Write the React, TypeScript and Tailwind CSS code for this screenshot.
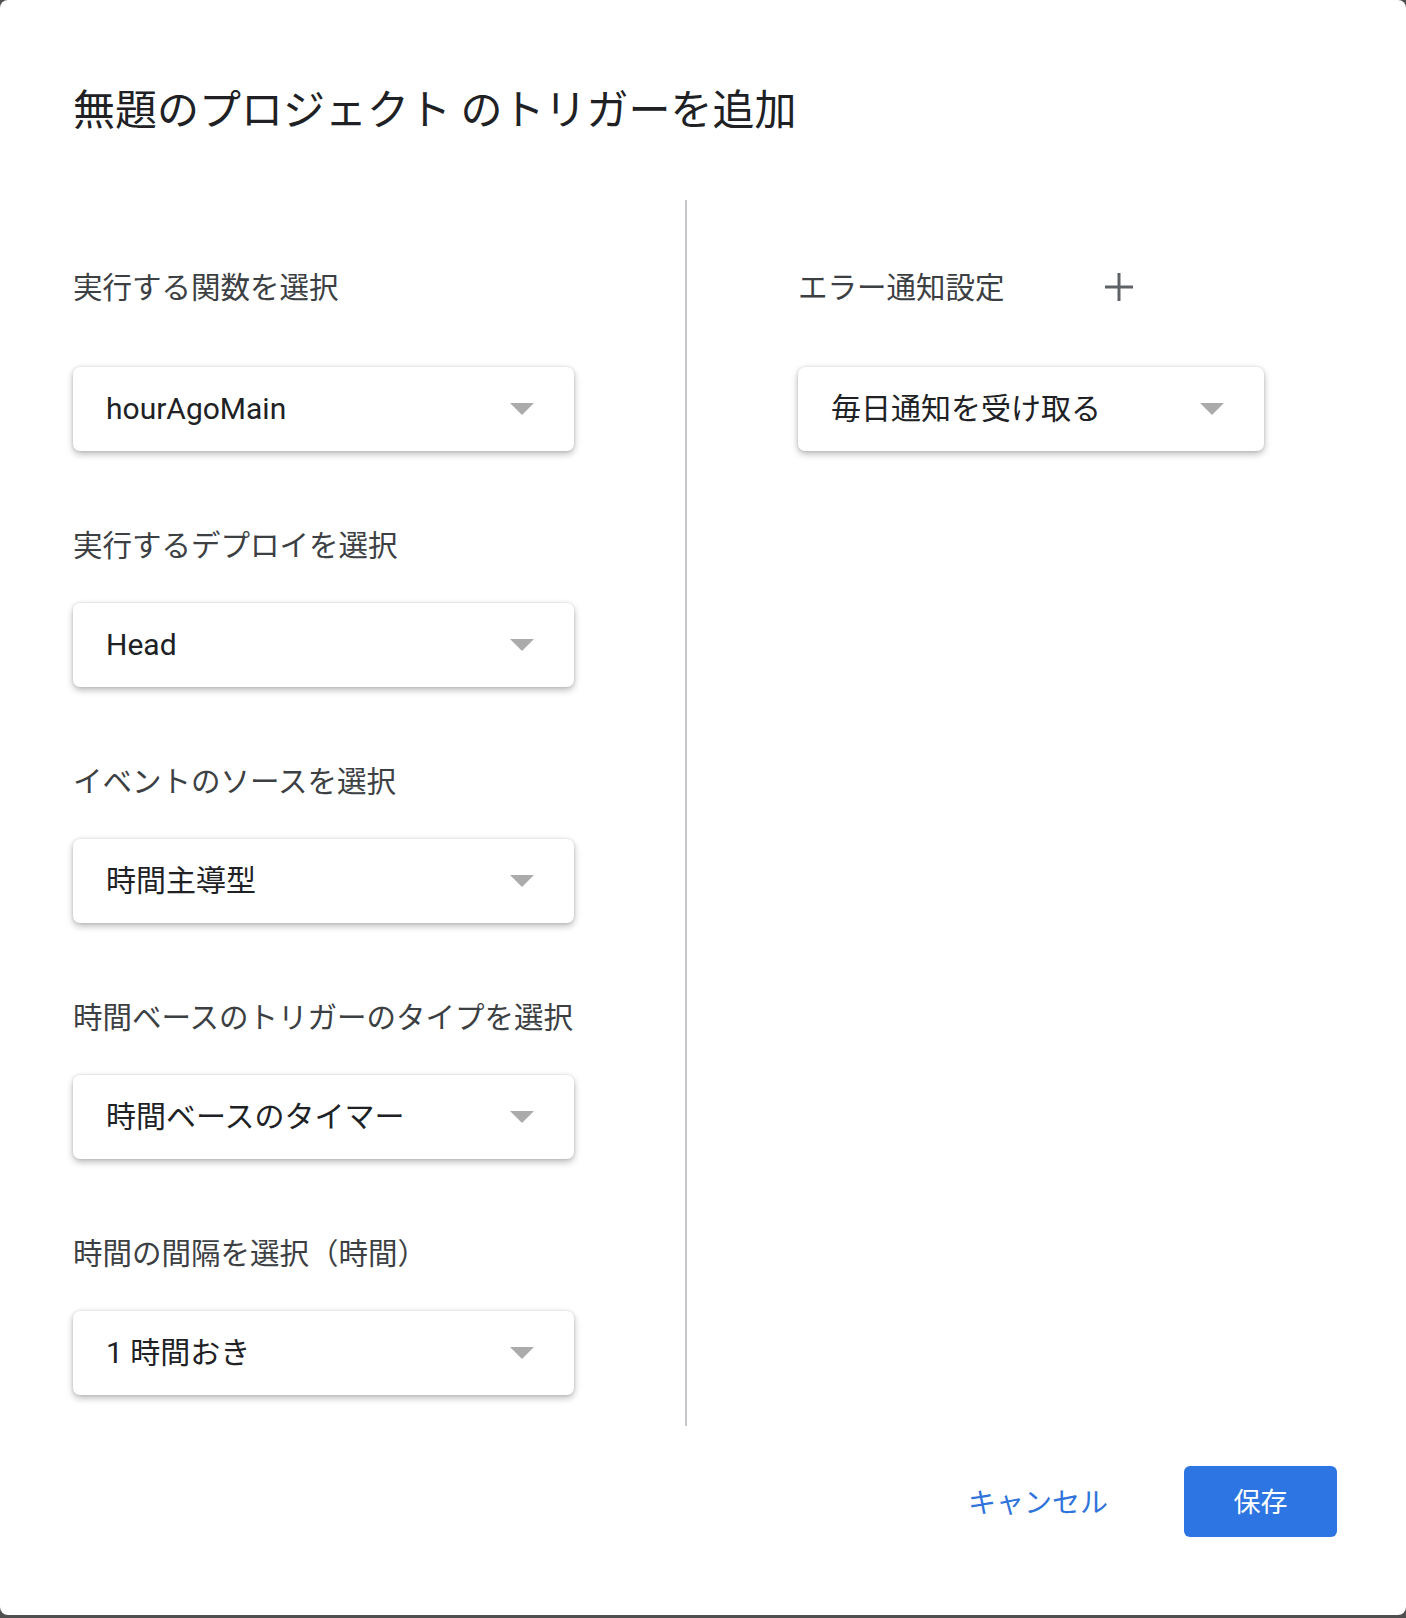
import React from "react";

const JP = { fontFamily: '"Noto Sans CJK JP", "Noto Sans", sans-serif' };
const MIX = { fontFamily: 'Roboto, "Noto Sans CJK JP", sans-serif' };

function Arrow() {
  return (
    <svg width="24" height="12" viewBox="0 0 24 12" className="shrink-0">
      <polygon points="0,0 24,0 12,12" fill="#ababab" />
    </svg>
  );
}

function Dropdown({ value, w }: { value: string; w: string }) {
  return (
    <div
      className={`${w} h-[84px] bg-white rounded-[7px] flex items-center justify-between pl-[33px] pr-[40px] shadow-[0_3px_7px_rgba(0,0,0,0.28),0_0_3px_rgba(0,0,0,0.12)]`}
    >
      <span className="text-[30px] text-[#202124] leading-none" style={MIX}>
        {value}
      </span>
      <Arrow />
    </div>
  );
}

function Label({ children, mt }: { children: React.ReactNode; mt: string }) {
  return (
    <div className={`${mt} h-[40px] leading-[36px] text-[29.5px] text-[#3c4043] whitespace-nowrap`} style={JP}>
      {children}
    </div>
  );
}

export default function App() {
  const sections = [
    { label: "実行するデプロイを選択", value: "Head" },
    { label: "イベントのソースを選択", value: "時間主導型" },
    { label: "時間ベースのトリガーのタイプを選択", value: "時間ベースのタイマー" },
    { label: "時間の間隔を選択（時間）", value: "1 時間おき" },
  ];
  return (
    <div className="w-[1406px] h-[1618px] bg-[#4f4f4f]">
      <div className="h-[1615px] bg-white rounded-[8px] flex flex-col">
        <div
          className="h-[200px] pt-[79px] pl-[73px] text-[42px] leading-[56px] text-[#202124] whitespace-nowrap"
          style={JP}
        >
          無題のプロジェクト のトリガーを追加
        </div>
        <div className="h-[1226px] flex">
          <div className="w-[501px] ml-[73px] pt-[67px] flex flex-col">
            <Label mt="mt-0">実行する関数を選択</Label>
            <div className="mt-[60px]">
              <Dropdown value="hourAgoMain" w="w-[501px]" />
            </div>
            {sections.map((s) => (
              <React.Fragment key={s.label}>
                <Label mt="mt-[74px]">{s.label}</Label>
                <div className="mt-[38px]">
                  <Dropdown value={s.value} w="w-[501px]" />
                </div>
              </React.Fragment>
            ))}
          </div>
          <div className="ml-[111px] w-[2px] h-full bg-[#c6c6ca]" />
          <div className="ml-[111px] pt-[67px] flex flex-col">
            <div className="h-[40px] flex items-center">
              <span className="text-[29.5px] leading-[36px] pb-[4px] text-[#3c4043]" style={JP}>
                エラー通知設定
              </span>
              <svg width="30" height="30" viewBox="0 0 30 30" className="ml-[99px]">
                <rect x="13.5" y="1" width="3" height="28" fill="#5f6368" />
                <rect x="1" y="13.5" width="28" height="3" fill="#5f6368" />
              </svg>
            </div>
            <div className="mt-[60px]">
              <Dropdown value="毎日通知を受け取る" w="w-[466px]" />
            </div>
          </div>
        </div>
        <div className="mt-[40px] flex justify-end items-center pr-[69px]">
          <button className="text-[28px] text-[#2f74dc] leading-none mr-[76px] pb-[2px]" style={JP}>
            キャンセル
          </button>
          <button
            className="w-[153px] h-[71px] rounded-[6px] bg-[#2c75e2] text-white text-[27px] leading-none flex items-center justify-center pb-[2px]"
            style={JP}
          >
            保存
          </button>
        </div>
      </div>
    </div>
  );
}
